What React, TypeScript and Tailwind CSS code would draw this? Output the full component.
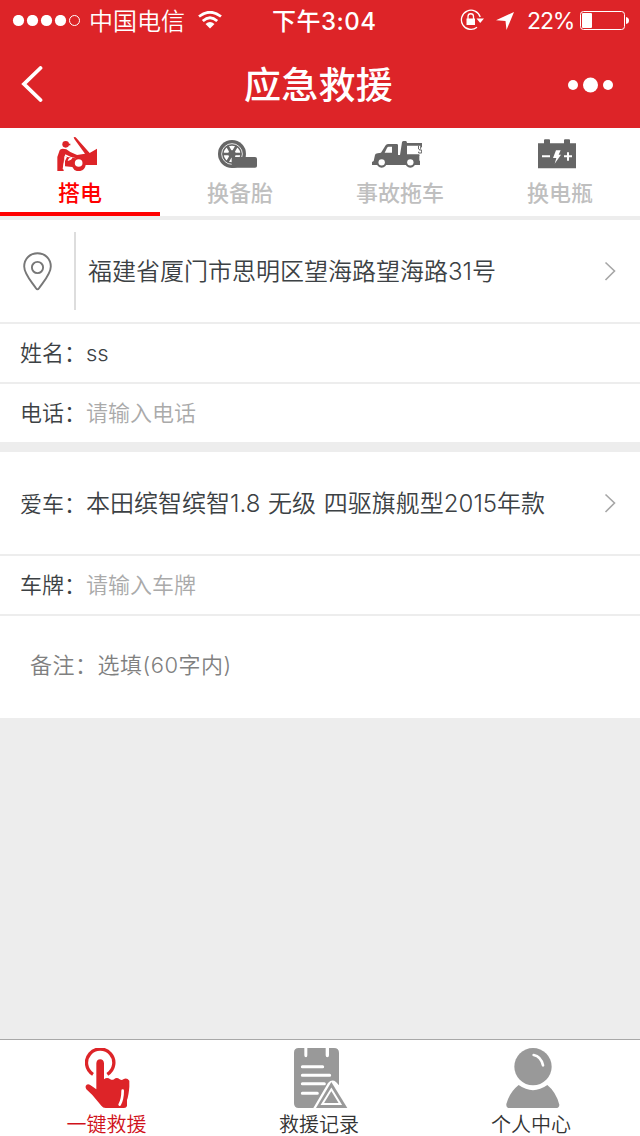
import type { ReactNode } from "react";

function JumpStartIcon() {
  return (
    <svg className="h-[34px] w-10" viewBox="0 0 120 102" fill="#dd2428">
      <circle cx="26" cy="22" r="10" />
      <path d="M26 20H40V25H26Z" />
      <path d="M60 54L84 50L52 6L50 0L56 1L98 48L120 35V84H86A21 21 0 0 1 46 90L24 88L20 76L24 58L31 60L56 64Z" />
      <path d="M8 40Q10 35 17 35L28 37L40 45L62 55L58 64L42 60L25 52L22 62L17 96L20 98V102H1V60Z" />
      <path d="M32 72Q34 62 45 60Q48 64 42 68Q36 70 32 72Z" fill="#fff" />
      <path d="M23 56L19 92L24 88V72L30 60Z" fill="#fff" />
      <circle cx="65" cy="78" r="11.500" fill="#fff" />
    </svg>
  );
}

function TyreIcon() {
  return (
    <svg className="h-7 w-[39px]" viewBox="0 0 117 84" fill="none">
      <circle cx="42" cy="42" r="42" fill="#666" />
      <circle cx="42" cy="42" r="31" stroke="#fff" strokeWidth="2.500" />
      <circle cx="42" cy="42" r="18" stroke="#fff" strokeWidth="14" />
      <path
        d="M14 42H70M28 18L56 66M56 18L28 66"
        stroke="#666"
        strokeWidth="8"
      />
      <circle cx="42" cy="42" r="9" fill="#666" />
      <path d="M41 51H111Q117 51 117 57V78Q117 83 111 83H41Z" fill="#666" />
    </svg>
  );
}

function TowTruckIcon() {
  return (
    <svg className="h-[27px] w-[50px]" viewBox="0 0 150 81" fill="#666">
      <path
        fillRule="evenodd"
        d="M0 63L5 60L9 42Q10 38 17 37L27 35L41 13Q44 9 50 9H74Q78 9 78 13V42H84L90 4Q91 0 95 0H101Q105 0 105 6H150V19H145V14H105V42H142V58L144 61V72H0ZM38 35H60V17H50Q47 17 45 21Z"
      />
      <path d="M105 40H142V45H105ZM138 14H141V25H138Z" />
      <path
        d="M146 17V22L142 27H149V36H140V32"
        fill="none"
        stroke="#666"
        strokeWidth="3"
      />
      <circle cx="29" cy="64" r="16" />
      <circle cx="115" cy="64" r="16" />
      <circle cx="29" cy="64" r="9.500" fill="#fff" />
      <circle cx="115" cy="64" r="9.500" fill="#fff" />
    </svg>
  );
}

function BatteryIcon() {
  return (
    <svg className="h-[30px] w-[39px]" viewBox="0 0 117 90" fill="#666">
      <path d="M0 13H18V4Q18 1 21 1H33Q36 1 36 4V13H78V4Q78 1 81 1H93Q96 1 96 4V13H114V88H0Z" />
      <path
        d="M12 49H36V55H12ZM78 49H87V40H93V49H102V55H93V65H87V55H78ZM54 34H68L62 47H69L50 74L55 57H45Z"
        fill="#fff"
      />
    </svg>
  );
}

function HandIcon() {
  return (
    <svg className="ml-0.5 h-[60px] w-[45px] shrink-0" viewBox="0 0 135 180" fill="none">
      <path d="M24 79A41 41 0 1 1 67 79" stroke="#dd2428" strokeWidth="10" />
      <path
        d="M34 46Q35 34 45.500 34Q56 34 57 46V94Q66 86 76 94Q82 97 87 94Q95 86 104 94Q110 98 115 94Q125 87 133 98V116Q131 142 126 156V174Q124 180 117 180H62Q54 180 49 173L22 141L4 124Q-1 114 5 110Q12 107 20 114L34 124Z"
        fill="#dd2428"
      />
      <path
        d="M113 128Q113 153 104 170"
        stroke="#fff"
        strokeWidth="8"
        strokeLinecap="round"
      />
    </svg>
  );
}

function RecordIcon() {
  return (
    <svg className="ml-1 h-[60px] w-[54px] shrink-0" viewBox="0 0 162 180" fill="none">
      <path
        d="M14 0H31V22Q31 28 36 28Q40 28 40 22V0H95V22Q95 28 100 28Q105 28 105 22V0H120Q135 0 135 15V112L126 102Q114 92 102 105L58 180H14Q0 180 0 166V14Q0 0 14 0Z"
        fill="#999"
      />
      <path
        d="M25 56H86M25 82H107M25 107H91M25 136H70"
        stroke="#fff"
        strokeWidth="9"
        strokeLinecap="round"
      />
      <path d="M112 102L160 180H66Z" fill="#999" />
      <path d="M112 124L139 168H85Z" stroke="#fff" strokeWidth="6" />
      <path d="M112 144L125 164H99Z" fill="#999" />
    </svg>
  );
}

function PersonIcon() {
  return (
    <svg className="ml-[3px] h-[60px] w-[54px] shrink-0" viewBox="0 0 162 180" fill="none">
      <circle cx="81" cy="56" r="56" fill="#999" />
      <path
        d="M38 111Q81 142 124 111Q150 132 160 170Q160 180 149 180H11Q0 180 1 168Q11 132 38 111Z"
        fill="#999"
      />
      <path
        d="M83 21Q105 25 111 52"
        stroke="#fff"
        strokeWidth="8"
        strokeLinecap="round"
      />
    </svg>
  );
}

function Chevron() {
  return (
    <svg className="mr-6 h-5 w-3 shrink-0" viewBox="0 0 12 20" fill="none">
      <path d="M1.500 1.500L10.500 10L1.500 19" stroke="#a6a6a6" strokeWidth="1.600" />
    </svg>
  );
}

function StatusBar() {
  return (
    <div className="flex h-10 items-center pt-0.5 text-2xl leading-[38px]">
      <svg className="ml-3 h-3 w-[69px] shrink-0" viewBox="0 0 69 12">
        <g fill="#fff">
          <circle cx="6.500" cy="5.500" r="5.600" />
          <circle cx="20.500" cy="5.500" r="5.600" />
          <circle cx="34.500" cy="5.500" r="5.600" />
          <circle cx="48.500" cy="5.500" r="5.600" />
        </g>
        <circle cx="62.500" cy="5.500" r="5" fill="none" stroke="#fff" />
      </svg>
      <span className="ml-2 w-[97px] pt-0.5">中国电信</span>
      <svg className="mb-0.5 ml-3 h-[18px] w-6 shrink-0" viewBox="0 0 24 18" fill="none">
        <g stroke="#fff" strokeWidth="2.800">
          <path d="M1 5.500Q12 -3 23 5.500" />
          <path d="M4.800 10Q12 3.500 19.200 10" />
        </g>
        <path d="M7.500 13Q12 9 16.500 13L12 17.500Z" fill="#fff" />
      </svg>
      <span className="ml-[50px] w-[110px] whitespace-nowrap pt-px font-medium tracking-[0.500px]">
        下午3:04
      </span>
      <svg className="mb-0.5 ml-[78px] h-[22px] w-6 shrink-0" viewBox="0 0 24 22" fill="none">
        <path
          d="M20.200 8A9.600 9.600 0 1 0 17 18.300"
          stroke="#fff"
          strokeWidth="1.300"
        />
        <path d="M16.500 9.500H24L20.200 14Z" fill="#fff" />
        <path d="M6.500 9.500H15V16H6.500Z" fill="#fff" />
        <path
          d="M8 10V7.500A2.750 2.750 0 0 1 13.500 7.500V10"
          stroke="#fff"
          strokeWidth="1.300"
        />
      </svg>
      <svg className="ml-3 h-[18px] w-[18px] shrink-0" viewBox="0 0 18 18">
        <path d="M18 0L10.500 18L9.500 9L0 8.200Z" fill="#fff" />
      </svg>
      <span className="ml-[13px] w-[53px] whitespace-nowrap text-[23px] font-normal tracking-[-1.100px]">
        22%
      </span>
      <svg className="mb-0.5 h-[19px] w-[49px] shrink-0" viewBox="0 0 49 19" fill="none">
        <rect x="0.500" y="0.500" width="44" height="18" rx="3" stroke="#fff" />
        <rect x="2" y="2" width="10" height="15" rx="1" fill="#fff" />
        <path d="M46 6Q49 6.500 49 9.500Q49 12.500 46 13Z" fill="#fff" />
      </svg>
    </div>
  );
}

function ServiceTab({
  icon,
  label,
  active = false,
}: {
  icon: ReactNode;
  label: string;
  active?: boolean;
}) {
  return (
    <button
      className={
        active
          ? "flex h-[88px] w-40 flex-col items-center border-b-4 border-[#f00] text-[#f00]"
          : "flex h-[88px] w-40 flex-col items-center border-b-4 border-transparent text-[#bfbfbf]"
      }
    >
      <span className="flex h-[50px] items-center justify-center pr-1.5 pt-0.5">
        {icon}
      </span>
      <span className="text-[22px] font-medium leading-[30px]">{label}</span>
    </button>
  );
}

function NavItem({
  icon,
  label,
  active = false,
}: {
  icon: ReactNode;
  label: string;
  active?: boolean;
}) {
  return (
    <button
      className={
        active
          ? "flex w-[213px] flex-col items-center pt-2 text-[#d0121b]"
          : "flex w-[212px] flex-col items-center pt-2 text-[#333]"
      }
    >
      {icon}
      <span className="text-xl leading-[35px]">{label}</span>
    </button>
  );
}

function Field({
  label,
  value,
  muted = false,
}: {
  label: string;
  value: string;
  muted?: boolean;
}) {
  return (
    <div className="flex h-[58px] box-content items-center pl-5 text-[22px]">
      <span className="w-[66px]">{label}</span>
      <span className={muted ? "text-[#aaa]" : ""}>{value}</span>
    </div>
  );
}

export default function App() {
  return (
    <div className="flex h-[1136px] w-[640px] flex-col overflow-hidden bg-[#ededed] font-[Inter,'Noto_Sans_CJK_SC',sans-serif] font-[350] text-[#3c4144]">
      <header className="h-32 bg-[#dd2428] text-white">
        <StatusBar />
        <div className="flex h-[88px] items-center justify-between">
          <svg className="ml-[21px] h-9 w-[49px]" viewBox="0 0 49 36" fill="none">
            <path
              d="M19.500 2L3 18L19.500 34"
              stroke="#fff"
              strokeWidth="3.800"
              strokeLinecap="round"
            />
          </svg>
          <h1 className="pt-[3px] text-[37px] font-medium leading-[85px] tracking-[0.200px]">
            应急救援
          </h1>
          <svg className="mr-[26px] mt-0.5 h-4 w-[47px]" viewBox="0 0 47 16" fill="#fff">
            <circle cx="6" cy="8" r="5" />
            <circle cx="23.500" cy="8" r="7.500" />
            <circle cx="41" cy="8" r="5" />
          </svg>
        </div>
      </header>

      <nav className="mb-1 flex bg-white">
        <ServiceTab icon={<JumpStartIcon />} label="搭电" active />
        <ServiceTab icon={<TyreIcon />} label="换备胎" />
        <ServiceTab icon={<TowTruckIcon />} label="事故拖车" />
        <ServiceTab icon={<BatteryIcon />} label="换电瓶" />
      </nav>

      <section className="divide-y-2 divide-[#ededed] bg-white">
        <div className="flex h-[104px] items-center">
          <svg className="ml-[23px] h-[39px] w-[30px]" viewBox="0 0 30 39" fill="none">
            <path
              d="M14.500 1.200C7 1.200 1.200 6.800 1.200 14.500C1.200 22 8 29 13 36.200Q14.500 38.400 16 36.200C21 29 27.800 22 27.800 14.500C27.800 6.800 22 1.200 14.500 1.200Z"
              stroke="#777"
              strokeWidth="1.900"
            />
            <circle cx="14.500" cy="15.500" r="5.600" stroke="#777" strokeWidth="1.900" />
          </svg>
          <span className="ml-[21px] h-[78px] w-0.5 bg-[#ddd]" />
          <span className="ml-3 flex-1 pt-0.5 text-2xl">福建省厦门市思明区望海路望海路31号</span>
          <Chevron />
        </div>
        <Field label="姓名：" value="ss" />
        <Field label="电话：" value="请输入电话" muted />
      </section>

      <section className="mt-2.5 divide-y-2 divide-[#ededed] bg-white">
        <div className="flex h-[104px] items-center pl-5">
          <span className="w-[66px] pt-0.5 text-[22px]">爱车：</span>
          <span className="flex-1 pt-0.5 text-2xl [word-spacing:1px]">
            本田缤智缤智1.8 无级 四驱旗舰型2015年款
          </span>
          <Chevron />
        </div>
        <Field label="车牌：" value="请输入车牌" muted />
        <div className="flex h-[102px] items-center pb-[3px] pl-[30px] text-[22px] tracking-[0.500px] text-[#808080]">
          备注：选填(60字内)
        </div>
      </section>

      <footer className="mt-auto flex h-[97px] border-t border-[#a8a8a8] bg-white">
        <NavItem icon={<HandIcon />} label="一键救援" active />
        <NavItem icon={<RecordIcon />} label="救援记录" />
        <NavItem icon={<PersonIcon />} label="个人中心" />
      </footer>
    </div>
  );
}
